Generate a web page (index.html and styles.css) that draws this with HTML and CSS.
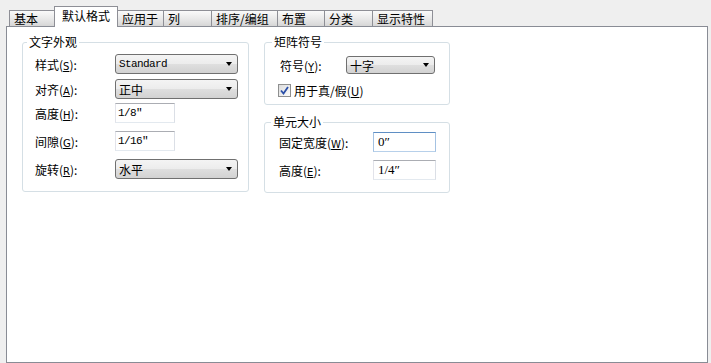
FILE: index.html
```html
<!DOCTYPE html>
<html>
<head>
    <title>默认格式</title>
    <link rel="stylesheet" href="styles.css">
</head>
<body>
    <div class="window">
        <div class="tabs">
            <div class="tab">基本</div>
            <div class="tab active">默认格式</div>
            <div class="tab">应用于</div>
            <div class="tab">列</div>
            <div class="tab">排序/编组</div>
            <div class="tab">布置</div>
            <div class="tab">分类</div>
            <div class="tab">显示特性</div>
        </div>
        <div class="panel">
            <fieldset class="group text-look">
                <legend>文字外观</legend>
                <div class="row">
                    <span class="label">样式(<u>S</u>):</span>
                    <div class="combo wide"><span class="mono">Standard</span><i class="arrow"></i></div>
                </div>
                <div class="row">
                    <span class="label">对齐(<u>A</u>):</span>
                    <div class="combo wide"><span>正中</span><i class="arrow"></i></div>
                </div>
                <div class="row tight">
                    <span class="label">高度(<u>H</u>):</span>
                    <div class="input short"><span class="mono">1/8″</span></div>
                </div>
                <div class="row loose">
                    <span class="label">间隙(<u>G</u>):</span>
                    <div class="input short"><span class="mono">1/16″</span></div>
                </div>
                <div class="row loose">
                    <span class="label">旋转(<u>R</u>):</span>
                    <div class="combo wide"><span>水平</span><i class="arrow"></i></div>
                </div>
            </fieldset>

            <div class="right-col">
                <fieldset class="group matrix">
                    <legend>矩阵符号</legend>
                    <div class="row small">
                        <span class="label lbl-symbol">符号(<u>Y</u>):</span>
                        <div class="combo narrow"><span>十字</span><i class="arrow"></i></div>
                    </div>
                    <div class="check-row">
                        <span class="checkbox">
                            <svg width="9" height="9" viewBox="0 0 9 9"><path d="M1 4.5 L3.5 7.5 L8 1" fill="none" stroke="#2a4fa8" stroke-width="1.8"/></svg>
                        </span>
                        <span>用于真/假(<u>U</u>)</span>
                    </div>
                </fieldset>

                <fieldset class="group cell-size">
                    <legend>单元大小</legend>
                    <div class="row">
                        <span class="label lbl-cell">固定宽度(<u>W</u>):</span>
                        <div class="input medium focused"><span class="serif">0″</span></div>
                    </div>
                    <div class="row loose">
                        <span class="label lbl-cell">高度(<u>E</u>):</span>
                        <div class="input medium"><span class="serif">1/4″</span></div>
                    </div>
                </fieldset>
            </div>
        </div>
    </div>
</body>
</html>
```

FILE: styles.css
```css
body {
    margin: 0;
    background: #efefef;
    font-family: "Noto Sans CJK SC", "DejaVu Sans", sans-serif;
    font-size: 12px;
    color: #000;
}
.window {
    padding: 6px 0 0 6px;
    width: 702px;
}
.tabs {
    display: flex;
    align-items: flex-end;
    height: 20px;
    padding-left: 3px;
    position: relative;
    z-index: 1;
}
.tab {
    box-sizing: border-box;
    height: 16px;
    line-height: 15px;
    padding-left: 4px;
    margin-right: -1px;
    border: 1px solid #8e8f96;
    border-bottom: none;
    background: linear-gradient(#fafafa, #e6e6e6 60%, #d6d6d6);
    white-space: nowrap;
}
.tab:nth-child(1) { width: 46px; }
.tab:nth-child(2) { width: 64px; }
.tab:nth-child(3) { width: 47px; }
.tab:nth-child(4) { width: 49px; }
.tab:nth-child(5) { width: 67px; }
.tab:nth-child(6) { width: 48px; }
.tab:nth-child(7) { width: 49px; }
.tab:nth-child(8) { width: 61px; }
.tab.active {
    height: 21px;
    margin-bottom: -1px;
    padding-left: 7px;
    line-height: 18px;
    background: #fff;
    position: relative;
    z-index: 2;
}
.panel {
    box-sizing: border-box;
    height: 337px;
    border: 1px solid #898c95;
    background: #fff;
    display: flex;
    align-items: flex-start;
    gap: 15px;
    padding: 8px 0 0 15px;
}
.group {
    box-sizing: border-box;
    margin: 0;
    border: 1px solid #d5dfe5;
    border-radius: 3px;
    padding: 5px 8px 12px 12px;
}
.group legend {
    padding: 0 2px;
    margin-left: -8px;
    line-height: 14px;
    height: 14px;
}
.text-look {
    width: 227px;
}
.right-col {
    width: 186px;
    display: flex;
    flex-direction: column;
    gap: 10px;
}
.matrix {
    padding: 7px 8px 7px 15px;
}
.cell-size {
    padding: 3px 8px 12px 14px;
}
.row {
    display: flex;
    align-items: center;
    height: 20px;
    margin-top: 5px;
}
.row:first-of-type {
    margin-top: 0;
}
.row.tight { margin-top: 4px; }
.row.loose { margin-top: 8px; }
.row.small { height: 18px; }
.label {
    width: 80px;
    flex: none;
    white-space: nowrap;
}
.label u {
    font-family: "DejaVu Sans", sans-serif;
    font-size: 10px;
}
.lbl-symbol { width: 66px; }
.lbl-cell { width: 94px; }
.combo {
    box-sizing: border-box;
    height: 20px;
    border: 1px solid #707070;
    border-radius: 3px;
    background: linear-gradient(#f4f4f4, #ececec 50%, #dfdfdf 50%, #d2d2d2);
    display: flex;
    align-items: center;
    justify-content: space-between;
    padding: 0 5px 0 3px;
}
.combo.wide { width: 123px; }
.combo.narrow {
    width: 89px;
    height: 18px;
}
.arrow {
    width: 0;
    height: 0;
    border-left: 3.5px solid transparent;
    border-right: 3.5px solid transparent;
    border-top: 4px solid #000;
}
.input {
    box-sizing: border-box;
    height: 20px;
    border: 1px solid;
    border-color: #abadb3 #dbdfe6 #e3e9ef #e2e3ea;
    background: #fff;
    display: flex;
    align-items: center;
    padding-left: 2px;
}
.input.short { width: 60px; }
.input.medium {
    width: 63px;
    padding-left: 4px;
}
.input.focused {
    border-color: #5f8fc4 #a4c2e2 #b7d0ea #a4c2e2;
}
.mono {
    font-family: "Liberation Mono", monospace;
    font-size: 11px;
    letter-spacing: -0.6px;
}
.serif {
    font-family: "Liberation Serif", serif;
    font-size: 13px;
}
.check-row {
    display: flex;
    align-items: center;
    gap: 3px;
    margin: 10px 0 0 -2px;
    height: 13px;
}
.checkbox {
    box-sizing: border-box;
    width: 13px;
    height: 13px;
    border: 1px solid #8e8f8f;
    background: linear-gradient(135deg, #dcdcdc, #fbfbfb);
    display: flex;
    align-items: center;
    justify-content: center;
}
```
